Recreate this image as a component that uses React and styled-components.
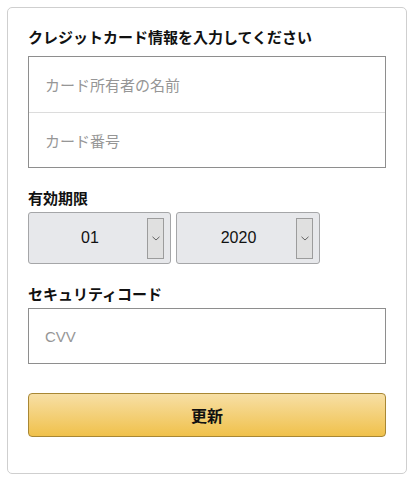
import React from "react";
import styled, { createGlobalStyle } from "styled-components";

const Global = createGlobalStyle`
  html, body { margin: 0; padding: 0; background: #fff; }
  body { font-family: "Liberation Sans", "Noto Sans CJK JP", sans-serif; color: #111; }
  * { box-sizing: border-box; }
`;

const Page = styled.div`
  padding: 7px;
  width: 413px;
`;

const Card = styled.div`
  width: 400px;
  height: 467px;
  border: 1px solid #cfcfcf;
  border-radius: 5px;
  padding: 19px 20px 0 20px;
  display: flex;
  flex-direction: column;
`;

const Title = styled.div`
  font-size: 15px;
  font-weight: 700;
  line-height: 22px;
  margin-bottom: 7px;
`;

const Label = styled.div`
  font-size: 15px;
  font-weight: 700;
  line-height: 20px;
  margin-top: ${(p) => p.$mt || 0}px;
  margin-bottom: 3px;
`;

const InputGroup = styled.div`
  border: 1px solid #8e8e8e;
  display: flex;
  flex-direction: column;
`;

const Field = styled.div`
  height: ${(p) => p.$h || 55}px;
  display: flex;
  align-items: center;
  padding-left: 16px;
  font-size: 15px;
  color: #969696;
  border-top: ${(p) => (p.$divider ? "1px solid #dcdcdc" : "none")};
`;

const SelectRow = styled.div`
  display: flex;
  gap: 5px;
`;

const Select = styled.div`
  width: ${(p) => p.$w}px;
  height: 52px;
  background: #e7e8eb;
  border: 1px solid #a5a6a8;
  border-radius: 3px;
  display: flex;
  align-items: center;
  padding-right: 6px;
`;

const SelectValue = styled.div`
  flex: 1;
  text-align: center;
  font-size: 16px;
  color: #111;
  padding-left: 4px;
`;

const ArrowBox = styled.div`
  width: 17px;
  height: 41px;
  border: 1px solid #9c9c9c;
  background: #e0e0e0;
  display: flex;
  align-items: center;
  justify-content: center;
`;

const Button = styled.div`
  margin-top: 29px;
  height: 44px;
  border: 1px solid #a88734;
  border-radius: 4px;
  background: linear-gradient(to bottom, #f7dfa5, #f0c14b);
  display: flex;
  align-items: center;
  justify-content: center;
  font-size: 16px;
  font-weight: 700;
  color: #111;
`;

const Chevron = () => (
  <svg width="8" height="5" viewBox="0 0 8 5">
    <path d="M0.5 0.8 L4 4 L7.5 0.8" fill="none" stroke="#555" strokeWidth="0.9" />
  </svg>
);

export default function App() {
  return (
    <>
      <Global />
      <Page>
        <Card>
          <Title>クレジットカード情報を入力してください</Title>
          <InputGroup>
            <Field>カード所有者の名前</Field>
            <Field $divider>カード番号</Field>
          </InputGroup>
          <Label $mt={21}>有効期限</Label>
          <SelectRow>
            <Select $w={143}>
              <SelectValue>01</SelectValue>
              <ArrowBox><Chevron /></ArrowBox>
            </Select>
            <Select $w={144}>
              <SelectValue>2020</SelectValue>
              <ArrowBox><Chevron /></ArrowBox>
            </Select>
          </SelectRow>
          <Label $mt={21}>セキュリティコード</Label>
          <InputGroup>
            <Field $h={54}>CVV</Field>
          </InputGroup>
          <Button>更新</Button>
        </Card>
      </Page>
    </>
  );
}
